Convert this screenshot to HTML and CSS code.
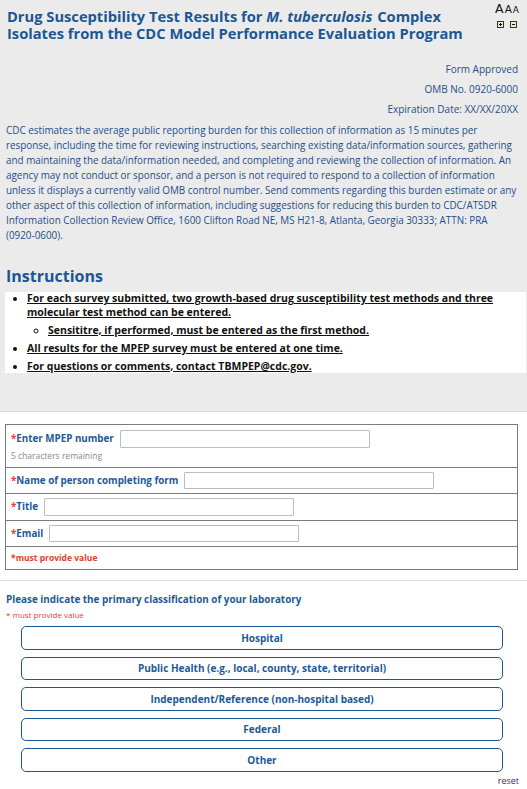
FILE: index.html
```html
<!DOCTYPE html>
<html>

<head>
  <title>Drug Susceptibility Test Results</title>
  <meta charset="utf-8">
  <link rel="stylesheet" href="styles.css">
</head>

<body>
  <!-- Header / Burden Statement -->
  <div class="intro">
    <div class="title-row">
      <h1>Drug Susceptibility Test Results for <i>M. tuberculosis</i> Complex Isolates from the CDC Model Performance Evaluation Program</h1>
      <div class="resizer">
        <div class="resizer-letters"><span class="a-lg">A</span><span class="a-md">A</span><span class="a-sm">A</span></div>
        <div class="resizer-buttons">
          <svg width="7" height="7" viewBox="0 0 7 7"><rect x="0.5" y="0.5" width="6" height="6" fill="#f4e9c8" stroke="#333"/><path d="M2 3.5h3M3.5 2v3" stroke="#111"/></svg>
          <svg width="7" height="7" viewBox="0 0 7 7"><rect x="0.5" y="0.5" width="6" height="6" fill="#f4e9c8" stroke="#333"/><path d="M2 3.5h3" stroke="#111"/></svg>
        </div>
      </div>
    </div>

    <div class="omb">
      <div>Form Approved</div>
      <div>OMB No. 0920-6000</div>
      <div>Expiration Date: XX/XX/20XX</div>
    </div>

    <p class="burden">CDC estimates the average public reporting burden for this collection of information as 15 minutes per response, including the time for reviewing instructions, searching existing data/information sources, gathering and maintaining the data/information needed, and completing and reviewing the collection of information. An agency may not conduct or sponsor, and a person is not required to respond to a collection of information unless it displays a currently valid OMB control number. Send comments regarding this burden estimate or any other aspect of this collection of information, including suggestions for reducing this burden to CDC/ATSDR Information Collection Review Office, 1600 Clifton Road NE, MS H21-8, Atlanta, Georgia 30333; ATTN: PRA <span class="nowrap">(0920-0600).</span></p>

    <h2>Instructions</h2>
    <ul class="instructions">
      <li><u>For each survey submitted, two growth-based drug susceptibility test methods and three molecular test method can be entered.</u>
        <ul>
          <li><u>Sensititre, if performed, must be entered as the first method.</u></li>
        </ul>
      </li>
      <li><u>All results for the MPEP survey must be entered at one time.</u></li>
      <li><u>For questions or comments, contact TBMPEP@cdc.gov.</u></li>
    </ul>
  </div>

  <!-- Contact Fields -->
  <div class="field-table">
    <div class="field-row first">
      <div class="field-line">
        <label><span class="req">*</span>Enter MPEP number</label>
        <input type="text">
      </div>
      <div class="hint">5 characters remaining</div>
    </div>
    <div class="field-row">
      <div class="field-line">
        <label><span class="req">*</span>Name of person completing form</label>
        <input type="text">
      </div>
    </div>
    <div class="field-row">
      <div class="field-line">
        <label><span class="req">*</span>Title</label>
        <input type="text">
      </div>
    </div>
    <div class="field-row">
      <div class="field-line">
        <label><span class="req">*</span>Email</label>
        <input type="text">
      </div>
    </div>
    <div class="field-row note">*must provide value</div>
  </div>

  <!-- Lab Classification -->
  <div class="classification">
    <div class="question">Please indicate the primary classification of your laboratory</div>
    <div class="required-note">* must provide value</div>
    <div class="choices">
      <button>Hospital</button>
      <button>Public Health (e.g., local, county, state, territorial)</button>
      <button>Independent/Reference (non-hospital based)</button>
      <button>Federal</button>
      <button>Other</button>
    </div>
    <div class="reset-row"><a href="#">reset</a></div>
  </div>
</body>

</html>
```

FILE: styles.css
```css
:root {
  --page-grey: #ebebeb;
  --title-blue: #1b5793;
  --label-blue: #1d5a96;
  --text-navy: #244e8a;
  --req-red: #e5402f;
  --rule-color: #dadada;
  --table-border: #7b7b7b;
}

body {
  font-family: "Open Sans", "Liberation Sans", sans-serif;
  margin: 0;
  background-color: #fff;
  color: var(--text-navy);
}

/* --- Intro panel --- */
.intro {
  background-color: var(--page-grey);
  padding: 8px 6px 38px 6px;
  border-bottom: 1px solid var(--rule-color);
}

.title-row {
  display: flex;
  justify-content: space-between;
}

h1 {
  flex: 0 1 470px;
  font-size: 14.7px;
  line-height: 16.7px;
  font-weight: 700;
  color: var(--title-blue);
  margin: 0 0 0 1px;
}

h1 i {
  padding-right: 1px;
}

.resizer {
  margin-top: -6px;
  margin-right: 2px;
  display: flex;
  flex-direction: column;
  align-items: flex-end;
}

.resizer-letters {
  color: #111;
  font-family: "DejaVu Sans", sans-serif;
  line-height: 14px;
  display: flex;
  align-items: baseline;
  gap: 1px;
}

.a-lg {
  font-size: 12.5px;
}

.a-md {
  font-size: 10.5px;
}

.a-sm {
  font-size: 9px;
}

.resizer-buttons {
  display: flex;
  gap: 6px;
  margin-top: 4px;
  margin-right: 2px;
}

.resizer-buttons svg {
  display: block;
}

.omb {
  text-align: right;
  font-size: 10px;
  line-height: 20px;
  margin: 18px 3px 0 0;
}

.burden {
  font-size: 9.9px;
  line-height: 15px;
  margin: 4px 0 0 0;
}

.nowrap {
  white-space: nowrap;
}

h2 {
  font-size: 16px;
  font-weight: 700;
  color: var(--title-blue);
  margin: 22px 0 5px 0;
}

.instructions {
  background-color: #fff;
  color: #111;
  font-size: 10.5px;
  font-weight: 700;
  line-height: 13.4px;
  margin: 0 -5px 0 -1px;
  padding: 0 0 0 22px;
  list-style-type: disc;
}

.instructions li {
  margin-top: 4.6px;
}

.instructions > li:first-child {
  margin-top: 0;
}

.instructions ul {
  list-style-type: circle;
  padding-left: 21px;
  margin: 0;
}

/* --- Field table --- */
.field-table {
  margin: 12px 9px 10px 5px;
  border: 1px solid var(--table-border);
}

.field-row {
  padding: 4px 5px;
  border-top: 1px solid var(--table-border);
}

.field-row.first {
  border-top: none;
  padding: 5px 5px 6px 5px;
}

.field-line {
  display: flex;
  align-items: center;
  gap: 6px;
}

.field-line label {
  font-size: 9.8px;
  font-weight: 700;
  color: var(--label-blue);
  white-space: nowrap;
}

.req {
  color: var(--req-red);
}

.field-line input {
  width: 250px;
  height: 17.5px;
  box-sizing: border-box;
  border: 1px solid #bdbdbd;
  border-radius: 1px;
  margin: 0;
  padding: 0 3px;
  background: #fff;
}

.hint {
  font-size: 8.5px;
  color: #8a8a8a;
  line-height: 11px;
  margin-top: 2px;
}

.field-row.note {
  font-size: 8.5px;
  font-weight: 700;
  color: var(--req-red);
  line-height: 14px;
  padding: 4px 5px;
}

/* --- Classification --- */
.classification {
  border-top: 1px solid var(--rule-color);
  padding: 11px 8px 0 6px;
}

.question {
  font-size: 9.9px;
  font-weight: 700;
  color: var(--label-blue);
  line-height: 14px;
}

.required-note {
  font-size: 8px;
  color: var(--req-red);
  line-height: 12px;
  margin-top: 3px;
}

.choices {
  display: flex;
  flex-direction: column;
  gap: 7px;
  margin: 5px 16px 0 15px;
}

.choices button {
  height: 23.5px;
  background-color: #fff;
  border: 1.5px solid var(--title-blue);
  border-radius: 5px;
  font-family: "Open Sans", "Liberation Sans", sans-serif;
  font-size: 10px;
  font-weight: 700;
  color: var(--label-blue);
  padding: 0;
  cursor: pointer;
}

.reset-row {
  text-align: right;
  font-size: 9px;
  line-height: 12px;
  margin-top: 3px;
}

.reset-row a {
  color: #3b2d74;
  text-decoration: none;
}
```
